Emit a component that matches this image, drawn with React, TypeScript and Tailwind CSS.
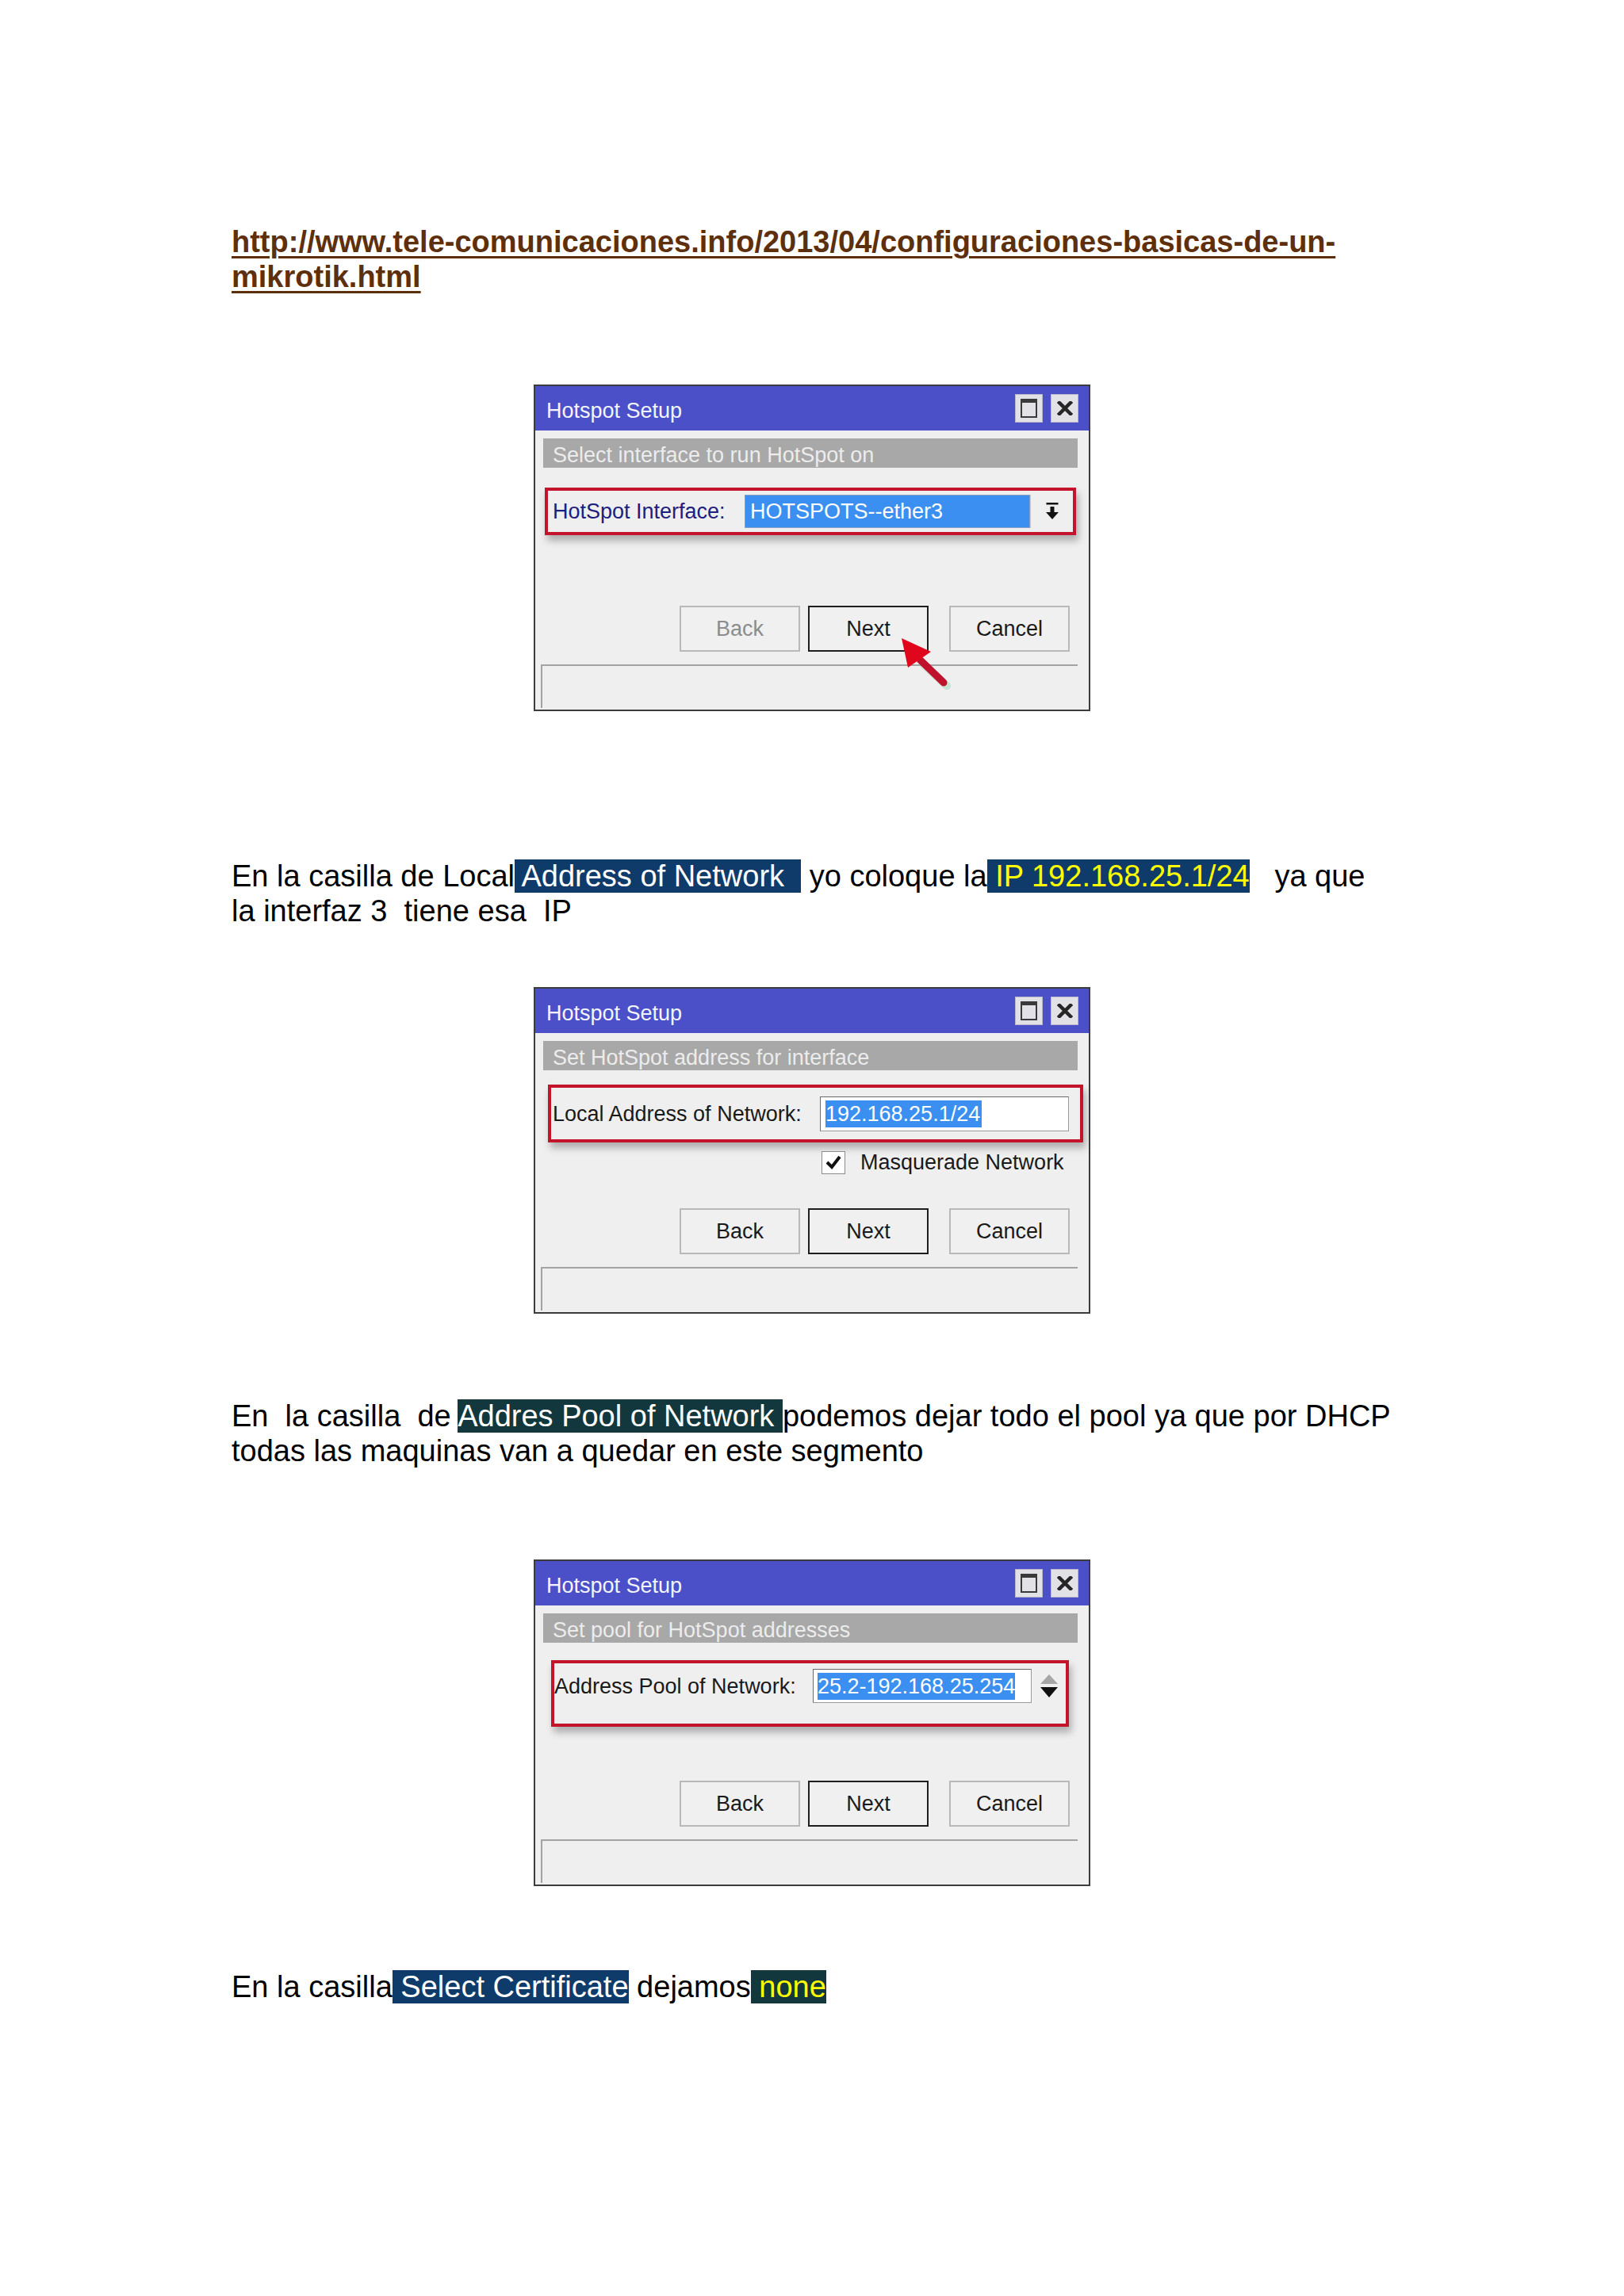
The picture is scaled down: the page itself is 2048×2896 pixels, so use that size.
import type { ReactNode } from "react";

const navy = "bg-[#0f3b6b]";
const teal = "bg-[#12373c]";

function TitleButtons() {
  return (
    <div className="flex gap-[10px]">
      <div className="flex h-[36px] w-[35px] items-center justify-center border border-[#b8b8c8] bg-[#e2e2e6]">
        <div className="h-[24px] w-[21px] border-2 border-t-[5px] border-[#3a3a3a]" />
      </div>
      <div className="flex h-[36px] w-[35px] items-center justify-center border border-[#b8b8c8] bg-[#e2e2e6]">
        <svg width="20" height="18" viewBox="0 0 20 18">
          <path d="M3 2 L17 16 M17 2 L3 16" stroke="#262626" strokeWidth="4.5" strokeLinecap="square" />
        </svg>
      </div>
    </div>
  );
}

function Btn({ label, focused, disabled }: { label: string; focused?: boolean; disabled?: boolean }) {
  return (
    <div
      className={`flex h-[58px] w-[152px] items-center justify-center border-2 bg-[#f0f0f0] text-[27px] ${
        focused ? "border-[#1e1e1e]" : "border-[#b9b9b9]"
      } ${disabled ? "text-[#8c8c8c]" : "text-[#1a1a1a]"}`}
    >
      {label}
    </div>
  );
}

function Dialog({
  subtitle,
  children,
  backDisabled,
  cursor,
}: {
  subtitle: string;
  children: ReactNode;
  backDisabled?: boolean;
  cursor?: boolean;
}) {
  return (
    <div className="relative mx-auto flex h-[412px] w-[702px] flex-col border-2 border-[#3c3c3c] bg-[#efefef] text-[#1a1a1a]">
      <div className="flex h-[56px] items-center justify-between bg-[#4b50c9] pl-[14px] pr-[13px]">
        <span className="pt-[6px] text-[27px] text-[#f4f4ff]">Hotspot Setup</span>
        <TitleButtons />
      </div>
      <div className="ml-[10px] mr-[14px] mt-[10px] h-[37px] bg-[#a8a8a8] pl-[12px] pt-[3px] text-[27px] leading-[37px] text-[#ececec]">
        {subtitle}
      </div>
      {children}
      <div className="mt-auto flex justify-end pr-[24px]">
        <Btn label="Back" disabled={backDisabled} />
        <div className="ml-[10px]">
          <Btn label="Next" focused />
        </div>
        <div className="ml-[26px]">
          <Btn label="Cancel" />
        </div>
      </div>
      <div className="mb-[2px] ml-[7px] mr-[14px] mt-[16px] h-[55px] border-l-2 border-t-2 border-[#a3a3a3]" />
      {cursor && (
        <svg className="absolute left-[455px] top-[312px]" width="72" height="72" viewBox="0 0 72 72">
          <path d="M34 38 L64 66" stroke="#9fd8b8" strokeWidth="10" strokeLinecap="round" opacity="0.5" />
          <path d="M30 33 L60 62" stroke="#c0122c" strokeWidth="9" strokeLinecap="round" />
          <polygon points="7,6 44,23 15,43" fill="#e0061c" />
        </svg>
      )}
    </div>
  );
}

const redBox = "border-[4px] border-[#c3142c] shadow-[3px_7px_9px_rgba(0,0,0,0.28)]";

export default function App() {
  return (
    <div
      className="h-[2896px] w-[2048px] bg-white pl-[292px] pt-[283px] text-[38px] leading-[44px] text-black"
      style={{ fontFamily: '"Liberation Sans", Arial, sans-serif' }}
    >
      <p className="font-bold text-[#5e2f0c] underline decoration-[3px] underline-offset-[5px]">
        http://www.tele-comunicaciones.info/2013/04/configuraciones-basicas-de-un-
        <br />
        mikrotik.html
      </p>

      <div className="-ml-[292px] mt-[114px]">
        <Dialog subtitle="Select interface to run HotSpot on" backDisabled cursor>
          <div className={`ml-[12px] mr-[16px] mt-[25px] flex h-[60px] items-center pl-[6px] ${redBox}`}>
            <span className="w-[242px] text-[27px] text-[#1e2080]">HotSpot Interface:</span>
            <div className="flex h-[42px] w-[360px] items-center border border-[#8aa0c0] bg-[#3a8ff0] pl-[6px] text-[27px] text-white">
              HOTSPOTS--ether3
            </div>
            <div className="flex h-[42px] flex-1 items-center justify-center border-l border-[#c8c8c8]">
              <svg width="16" height="22" viewBox="0 0 16 22">
                <rect x="0.5" y="0" width="15" height="2.5" fill="#111" />
                <rect x="5.5" y="5" width="5" height="7" fill="#111" />
                <polygon points="0,12 16,12 8,21" fill="#111" />
              </svg>
            </div>
          </div>
        </Dialog>
      </div>

      <p className="mt-[186px] whitespace-pre-wrap">
        {"En la casilla de Local"}
        <span className={`${navy} text-white`}>{" Address of Network  "}</span>
        {" yo coloque la"}
        <span className={`${navy} text-[#ffff00]`}>{" IP 192.168.25.1/24"}</span>
        {"   ya que"}
        <br />
        {"la interfaz 3  tiene esa  IP"}
      </p>

      <div className="-ml-[292px] mt-[74px]">
        <Dialog subtitle="Set HotSpot address for interface">
          <div className={`ml-[16px] mr-[7px] mt-[18px] flex h-[73px] items-center pl-[2px] pr-[14px] ${redBox}`}>
            <span className="w-[337px] text-[27px]">Local Address of Network:</span>
            <div className="flex h-[44px] flex-1 items-center border border-[#9a9a9a] border-l-[#6a6a6a] border-t-[#6a6a6a] bg-white pl-[6px]">
              <span className="bg-[#3a8ff0] pr-[2px] text-[27px] leading-[34px] text-white">192.168.25.1/24</span>
            </div>
          </div>
          <div className="mt-[3px] flex items-center pl-[361px]">
            <div className="flex h-[29px] w-[30px] items-center justify-center border border-[#8c8c8c] bg-white">
              <svg width="22" height="20" viewBox="0 0 22 20">
                <path d="M3 10 L9 16 L19 3" stroke="#111" strokeWidth="4" fill="none" />
              </svg>
            </div>
            <span className="ml-[19px] text-[27px]">Masquerade Network</span>
          </div>
        </Dialog>
      </div>

      <p className="mt-[107px] whitespace-pre-wrap">
        {"En  la casilla  de "}
        <span className={`${teal} text-white`}>{"Addres Pool of Network "}</span>
        {"podemos dejar todo el pool ya que por DHCP"}
        <br />
        {"todas las maquinas van a quedar en este segmento"}
      </p>

      <div className="-ml-[292px] mt-[115px]">
        <Dialog subtitle="Set pool for HotSpot addresses">
          <div className={`ml-[20px] mr-[25px] mt-[22px] h-[84px] pt-[7px] ${redBox}`}>
            <div className="flex h-[43px] items-center">
              <span className="w-[326px] overflow-hidden whitespace-nowrap text-[27px]">Address Pool of Network:</span>
              <div className="flex h-[43px] w-[276px] items-center border border-[#9a9a9a] border-l-[#6a6a6a] border-t-[#6a6a6a] bg-white pl-[5px]">
                <span className="bg-[#3a8ff0] text-[27px] leading-[34px] text-white">25.2-192.168.25.254</span>
              </div>
              <div className="ml-[11px]">
                <svg width="22" height="30" viewBox="0 0 22 30">
                  <polygon points="11,0 0,12 22,12" fill="#a6a6a6" />
                  <polygon points="0,16 22,16 11,29" fill="#111" />
                </svg>
              </div>
            </div>
          </div>
        </Dialog>
      </div>

      <p className="mt-[105px] whitespace-pre-wrap">
        {"En la casilla"}
        <span className={`${navy} text-white`}>{" Select Certificate"}</span>
        {" dejamos"}
        <span className={`${teal} text-[#ffff00]`}>{" none"}</span>
      </p>
    </div>
  );
}
